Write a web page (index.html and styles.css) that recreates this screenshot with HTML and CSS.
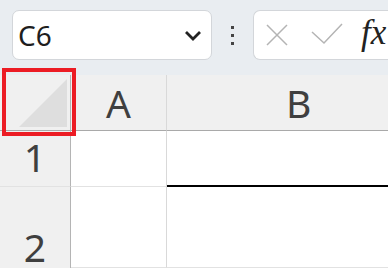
FILE: index.html
```html
<!DOCTYPE html>
<html lang="en">
    <head>
        <meta charset="UTF-8">
        <title>Sheet</title>
        <link rel="stylesheet" href="styles.css">
    </head>
    <body>
        <div class="toolbar">
            <div class="name-box">
                <span class="cell-ref">C6</span>
                <svg class="chevron" width="18" height="12" viewBox="0 0 18 12">
                    <path d="M2 2 L9 9 L16 2" fill="none" stroke="#222" stroke-width="2.8"/>
                </svg>
            </div>
            <div class="grip">
                <span></span><span></span><span></span>
            </div>
            <div class="formula-box">
                <svg class="cancel" width="22" height="22" viewBox="0 0 22 22">
                    <path d="M1 1 L21 21 M21 1 L1 21" fill="none" stroke="#b4b4b4" stroke-width="1.5"/>
                </svg>
                <svg class="enter" width="32" height="22" viewBox="0 0 32 22">
                    <path d="M1 9 L13 20 L31 1" fill="none" stroke="#b4b4b4" stroke-width="1.5"/>
                </svg>
                <span class="fx">fx</span>
            </div>
        </div>

        <div class="sheet">
            <div class="corner">
                <svg width="70" height="55" viewBox="0 0 70 55">
                    <polygon points="19,52 67,4 67,52" fill="#dedede"/>
                </svg>
            </div>
            <div class="col-head">A</div>
            <div class="col-head wide">B</div>

            <div class="row-head">1</div>
            <div class="cell"></div>
            <div class="cell edge"></div>

            <div class="row-head low">2</div>
            <div class="cell"></div>
            <div class="cell"></div>

            <div class="select-mark"></div>
        </div>
    </body>
</html>
```

FILE: styles.css
```css
body{
    margin:0;
    background:#e9edf1;
    font-family:"Noto Sans","Open Sans",sans-serif;
    overflow:hidden;
    width:388px;
    height:268px;
}
.toolbar{
    display:flex;
    align-items:flex-start;
    padding:10px 0 0 12px;
    height:65px;
}
.name-box{
    box-sizing:border-box;
    flex:none;
    width:200px;
    height:50px;
    background:white;
    border:1px solid #d3d6da;
    border-radius:7px;
    display:flex;
    align-items:center;
    justify-content:space-between;
    padding:0 9px 0 5px;
}
.cell-ref{
    font-size:28px;
    color:#1e1e1e;
}
.chevron{
    margin-top:2px;
}
.grip{
    flex:none;
    width:41px;
    height:50px;
    display:flex;
    flex-direction:column;
    align-items:center;
    justify-content:center;
    gap:5px;
}
.grip span{
    width:3px;
    height:3px;
    background:#444;
}
.formula-box{
    box-sizing:border-box;
    flex:1;
    height:50px;
    background:white;
    border:1px solid #d3d6da;
    border-right:none;
    border-radius:7px 0 0 7px;
    display:flex;
    align-items:center;
    padding-left:12px;
    overflow:hidden;
}
.cancel{
    margin-top:-1px;
}
.enter{
    margin-left:23px;
    margin-top:-3px;
}
.fx{
    font-family:"Liberation Serif",serif;
    font-style:italic;
    font-size:35px;
    color:#222;
    margin-left:18px;
    margin-top:-4px;
    white-space:nowrap;
}
.sheet{
    position:relative;
    display:grid;
    grid-template-columns:71px 96px 221px;
    grid-template-rows:56px 56px 81px;
    background:white;
}
.corner,.col-head{
    background:#f0f0f0;
    border-bottom:1px solid #a9a9a9;
    box-sizing:border-box;
}
.corner{
    border-right:1px solid #b4b4b4;
}
.corner svg{
    display:block;
}
.col-head{
    border-right:1px solid #d9d9d9;
    display:flex;
    align-items:center;
    justify-content:center;
    font-size:39px;
    color:#3f3f3f;
}
.col-head.wide{
    border-right:none;
    justify-content:flex-start;
    padding-left:119px;
}
.row-head{
    box-sizing:border-box;
    background:#f0f0f0;
    border-right:1px solid #b4b4b4;
    border-bottom:1px solid #e2e2e2;
    display:flex;
    align-items:center;
    justify-content:center;
    font-size:39px;
    color:#3f3f3f;
    padding-bottom:4px;
}
.row-head.low{
    align-items:flex-end;
    border-bottom:none;
    padding-bottom:2px;
    line-height:1;
}
.cell{
    box-sizing:border-box;
    border-right:1px solid #d9d9d9;
    border-bottom:1px solid #e2e2e2;
}
.cell:nth-child(3n){
    border-right:none;
}
.cell.edge{
    border-bottom:2px solid #000;
}
.select-mark{
    position:absolute;
    left:2px;
    top:-7px;
    width:66px;
    height:60px;
    border:4px solid #ec1c24;
}
```
